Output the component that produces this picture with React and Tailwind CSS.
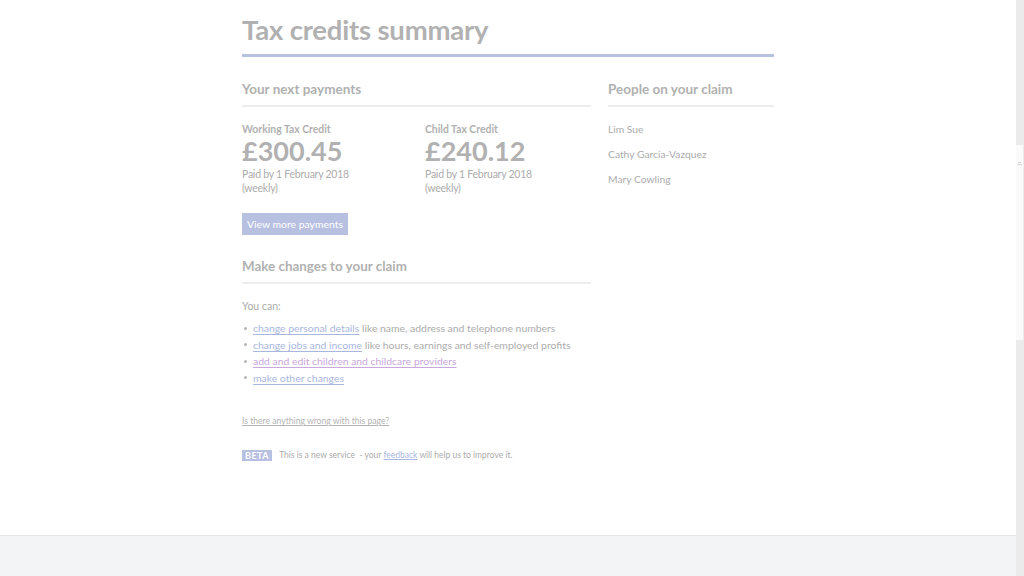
import React from "react";

const payments = [
  { label: "Working Tax Credit", amount: "£300.45" },
  { label: "Child Tax Credit", amount: "£240.12" },
];

const people = ["Lim Sue", "Cathy Garcia-Vazquez", "Mary Cowling"];

const changes = [
  { link: "change personal details", rest: " like name, address and telephone numbers" },
  { link: "change jobs and income", rest: " like hours, earnings and self-employed profits" },
  { link: "add and edit children and childcare providers", rest: "", visited: true },
  { link: "make other changes", rest: "" },
];

export default function App() {
  return (
    <div className="flex h-[576px] w-[1024px] overflow-hidden bg-white font-['Lato','Noto_Sans',sans-serif] text-[#acacac]">
      <div className="flex w-[1016px] flex-col">
        {/* page body */}
        <main className="h-[535px] w-full">
          <div className="mx-auto w-[532px]">
            <h1 className="mt-[15px] border-b-[3px] border-[#b7c1e0] pb-[9px] text-[27.5px] font-bold leading-[30px] tracking-[-0.2px] text-[#b1b1b1]">
              Tax credits summary
            </h1>

            <div className="flex gap-[17px]">
              {/* left column */}
              <div className="w-[349px]">
                <h2 className="mt-[22px] border-b-2 border-[#ededed] pb-[6px] text-[13.5px] font-bold leading-[20px] text-[#b1b1b1]">
                  Your next payments
                </h2>

                <div className="flex">
                  {payments.map((p) => (
                    <div key={p.label} className="w-[183px] shrink-0">
                      <p className="mt-[15px] text-[10.4px] font-bold leading-[14px] text-[#b1b1b1]">{p.label}</p>
                      <p className="text-[27px] font-bold leading-[30px] text-[#b1b1b1]">{p.amount}</p>
                      <p className="mt-[1px] text-[10.5px] leading-[14px] tracking-[-0.25px]">
                        Paid by 1 February 2018
                        <br />
                        (weekly)
                      </p>
                    </div>
                  ))}
                </div>

                <button className="mt-[18px] h-[22px] bg-[#b8c0e1] px-[5px] text-[10.4px] leading-[22px] text-white">
                  View more payments
                </button>

                <h2 className="mt-[21px] border-b-2 border-[#ededed] pb-[6px] text-[13.4px] font-bold leading-[20px] text-[#b1b1b1]">
                  Make changes to your claim
                </h2>

                <p className="mt-[15px] text-[10.5px] leading-[14px]">You can:</p>

                <ul className="mt-[7px] text-[10.4px] leading-[16.5px]">
                  {changes.map((c) => (
                    <li key={c.link} className="flex items-center whitespace-nowrap">
                      <span className="mr-[6px] ml-[2px] h-[3px] w-[3px] rounded-full bg-[#b5b5b5]" />
                      <span>
                        <a
                          href="#"
                          className={`underline underline-offset-2 ${c.visited ? "text-[#c9a8dd]" : "text-[#a9b6de]"}`}
                        >
                          {c.link}
                        </a>
                        {c.rest}
                      </span>
                    </li>
                  ))}
                </ul>

                <a href="#" className="mt-[29px] block text-[8.6px] leading-[12px] text-[#b3b3b3] underline underline-offset-1">
                  Is there anything wrong with this page?
                </a>

                <div className="mt-[23px] flex items-center gap-[7px] text-[8.5px] leading-[11px]">
                  <span className="h-[11px] bg-[#b8c0e1] px-[3px] text-[9px] font-bold tracking-[0.5px] text-white">BETA</span>
                  <span className="whitespace-nowrap">
                    This is a new service &nbsp;- your{" "}
                    <a href="#" className="text-[#a9b6de] underline">feedback</a> will help us to improve it.
                  </span>
                </div>
              </div>

              {/* right column */}
              <div className="w-[166px]">
                <h2 className="mt-[22px] border-b-2 border-[#ededed] pb-[6px] text-[13.5px] font-bold leading-[20px] text-[#b1b1b1]">
                  People on your claim
                </h2>
                <ul className="mt-[15px] flex flex-col gap-[11px] text-[10.3px] leading-[14px]">
                  {people.map((n) => (
                    <li key={n}>{n}</li>
                  ))}
                </ul>
              </div>
            </div>
          </div>
        </main>

        {/* footer */}
        <footer className="flex-1 border-t border-[#e6e6e6] bg-[#f3f4f6]" />
      </div>

      {/* scrollbar */}
      <div className="flex w-[8px] flex-col bg-[#ebebeb]">
        <div className="mt-[145px] flex h-[195px] w-[7px] flex-col items-center bg-[#fafafa]">
          <span className="mt-[17px] h-[1px] w-[3px] bg-[#cfcfcf]" />
          <span className="mt-[1px] h-[1px] w-[5px] bg-[#d8d8d8]" />
        </div>
      </div>
    </div>
  );
}
